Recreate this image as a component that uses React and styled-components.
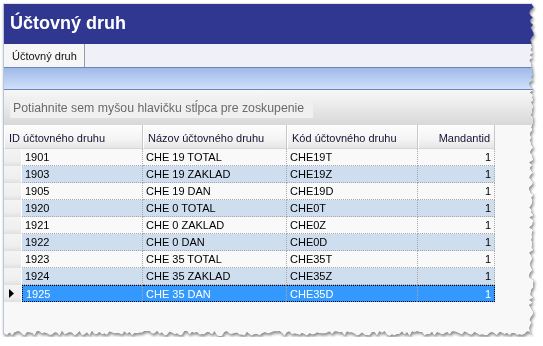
import React from "react";
import styled, { createGlobalStyle } from "styled-components";

const GlobalStyle = createGlobalStyle`
  html, body { margin: 0; padding: 0; background: #ffffff; }
  body { font-family: "Liberation Sans", Arial, sans-serif; }
`;

const rows = [
  ["1901", "CHE 19 TOTAL", "CHE19T", "1"],
  ["1903", "CHE 19 ZAKLAD", "CHE19Z", "1"],
  ["1905", "CHE 19 DAN", "CHE19D", "1"],
  ["1920", "CHE 0 TOTAL", "CHE0T", "1"],
  ["1921", "CHE 0 ZAKLAD", "CHE0Z", "1"],
  ["1922", "CHE 0 DAN", "CHE0D", "1"],
  ["1923", "CHE 35 TOTAL", "CHE35T", "1"],
  ["1924", "CHE 35 ZAKLAD", "CHE35Z", "1"],
  ["1925", "CHE 35 DAN", "CHE35D", "1"],
];

const W = 532;
const H = 334;

function tornPolygon() {
  let seed = 11;
  const rnd = () => {
    seed = (seed * 9301 + 49297) % 233280;
    return seed / 233280;
  };
  const pts = ["0px 0px", `${W - 4}px 0px`];
  for (let y = 2; y < H - 5; y += 2.5) {
    pts.push(`${(W - 6 + rnd() * 5).toFixed(1)}px ${y.toFixed(1)}px`);
  }
  for (let x = W - 3; x > 2; x -= 2.5) {
    pts.push(`${x.toFixed(1)}px ${(H - 6 + rnd() * 5).toFixed(1)}px`);
  }
  pts.push(`0px ${H - 4}px`);
  return `polygon(${pts.join(",")})`;
}

const Page = styled.div`
  padding: 3px 0 0 3px;
`;

const Shadow = styled.div`
  width: ${W}px;
  height: ${H}px;
  filter: drop-shadow(0.5px 0.5px 0px rgba(0, 0, 0, 0.6)) drop-shadow(1.5px 2px 1.5px rgba(0, 0, 0, 0.45));
`;

const Window = styled.div`
  width: ${W}px;
  height: ${H}px;
  box-sizing: border-box;
  background: #f8f8f8;
  border-left: 1px solid #b9c6d8;
  border-top: 1px solid #e4e4e4;
  display: flex;
  flex-direction: column;
`;

const TitleBar = styled.div`
  height: 40px;
  background: #2f3790;
  color: #ffffff;
  font-weight: bold;
  font-size: 18px;
  display: flex;
  align-items: center;
  padding-left: 6px;
  padding-bottom: 1px;
  box-sizing: border-box;
`;

const TabStrip = styled.div`
  height: 23px;
  background: #eff0f8;
  display: flex;
`;

const Tab = styled.div`
  width: 81px;
  box-sizing: border-box;
  background: #f6f6f6;
  border-right: 1px solid #9a9a9a;
  font-size: 11px;
  color: #111;
  display: flex;
  align-items: center;
  padding-left: 8px;
  padding-top: 1px;
`;

const BlueBar = styled.div`
  height: 23px;
  box-sizing: border-box;
  border-top: 1px solid #6b86b6;
  border-bottom: 1px solid #6b86b6;
  background: linear-gradient(to bottom, #9fb9e9, #cfe0f9);
`;

const GroupPanel = styled.div`
  height: 35px;
  box-sizing: border-box;
  padding: 7px 0 0 6px;
  background: linear-gradient(to bottom, #f7f7f7 0%, #ececec 40%, #d8d8d8 100%);
`;

const GroupBox = styled.div`
  width: 303px;
  height: 21px;
  box-sizing: border-box;
  background: #f0f0f0;
  color: #6a6a6a;
  font-size: 12.3px;
  display: flex;
  align-items: center;
  padding-left: 3px;
  white-space: nowrap;
  overflow: hidden;
`;

const Grid = styled.div`
  display: grid;
  grid-template-columns: 18px 121px 144px 131px 77px;
  font-size: 11px;
  color: #000;
`;

const HeaderCell = styled.div`
  grid-column: ${(p) => p.$span || "auto"};
  height: 24px;
  box-sizing: border-box;
  background: linear-gradient(to bottom, #fdfdfd 0%, #f4f4f4 60%, #e6e6e6 100%);
  border-right: 1px solid #c8c8c8;
  border-left: 1px solid #ffffff;
  border-bottom: 1px solid #d6d6d6;
  display: flex;
  align-items: center;
  justify-content: ${(p) => (p.$right ? "flex-end" : "flex-start")};
  padding: 2px ${(p) => (p.$right ? "4px" : "0")} 0 ${(p) => (p.$right ? "0" : "4px")};
  color: #1b1030;
`;

const RowHeader = styled.div`
  height: 17px;
  box-sizing: border-box;
  background: linear-gradient(to bottom, #f4f4f4 0%, #efefef 70%, #e0e0e0 100%);
  border-right: 1px solid #ffffff;
  display: flex;
  align-items: center;
  padding-left: 5px;
  color: #000;
`;

const Cell = styled.div`
  height: 17px;
  box-sizing: border-box;
  background: ${(p) => (p.$sel ? "#3399ff" : p.$alt ? "#cfdeef" : "#f9f9f9")};
  color: ${(p) => (p.$sel ? "#ffffff" : "#000")};
  border-right: 1px dotted #a8a8a8;
  border-bottom: 1px dotted #a8a8a8;
  display: flex;
  align-items: center;
  justify-content: ${(p) => (p.$right ? "flex-end" : "flex-start")};
  padding: 0 ${(p) => (p.$right ? "3px" : "0")} 0 ${(p) => (p.$right ? "0" : "3px")};
  white-space: nowrap;
  overflow: hidden;
  ${(p) =>
    p.$sel &&
    `border-top: 1px dotted #000; border-bottom: 1px dotted #000;`}
  ${(p) => p.$sel && p.$first && `border-left: 1px dotted #000;`}
  ${(p) => p.$sel && p.$last && `border-right: 1px dotted #000;`}
`;

const Arrow = styled.svg`
  width: 5px;
  height: 9px;
`;

export default function App() {
  return (
    <>
      <GlobalStyle />
      <Page>
        <Shadow>
          <Window style={{ clipPath: tornPolygon() }}>
            <TitleBar>Účtovný druh</TitleBar>
            <TabStrip>
              <Tab>Účtovný druh</Tab>
            </TabStrip>
            <BlueBar />
            <GroupPanel>
              <GroupBox>Potiahnite sem myšou hlavičku stĺpca pre zoskupenie</GroupBox>
            </GroupPanel>
            <Grid>
              <HeaderCell $span="span 2">ID účtovného druhu</HeaderCell>
              <HeaderCell>Názov účtovného druhu</HeaderCell>
              <HeaderCell>Kód účtovného druhu</HeaderCell>
              <HeaderCell $right>Mandantid</HeaderCell>
              {rows.map((r, i) => {
                const sel = i === rows.length - 1;
                const alt = i % 2 === 1;
                return (
                  <React.Fragment key={r[0]}>
                    <RowHeader>
                      {sel && (
                        <Arrow viewBox="0 0 5 9">
                          <path d="M0 0 L5 4.5 L0 9 Z" fill="#000" />
                        </Arrow>
                      )}
                    </RowHeader>
                    <Cell $sel={sel} $alt={alt} $first>{r[0]}</Cell>
                    <Cell $sel={sel} $alt={alt}>{r[1]}</Cell>
                    <Cell $sel={sel} $alt={alt}>{r[2]}</Cell>
                    <Cell $sel={sel} $alt={alt} $right $last>{r[3]}</Cell>
                  </React.Fragment>
                );
              })}
            </Grid>
          </Window>
        </Shadow>
      </Page>
    </>
  );
}
